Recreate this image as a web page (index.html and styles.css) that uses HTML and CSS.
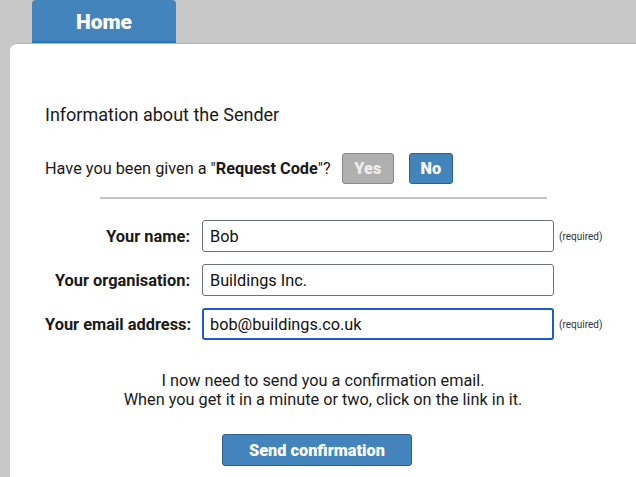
FILE: index.html
```html
<!DOCTYPE html>
<html lang="en">
<head>
<meta charset="utf-8">
<title>Information about the Sender</title>
<link rel="stylesheet" href="styles.css">
</head>
<body>
<nav class="tabs">
  <a class="tab" href="#">Home</a>
</nav>
<main class="card">
  <h1 class="heading">Information about the Sender</h1>
  <div class="question">
    <span>Have you been given a "<b>Request Code</b>"?</span>
    <button class="btn btn-off" type="button">Yes</button>
    <button class="btn btn-on" type="button">No</button>
  </div>
  <hr class="rule">
  <form class="form">
    <label class="label" for="name">Your name:</label>
    <input class="field" id="name" type="text" value="Bob">
    <span class="req">(required)</span>

    <label class="label" for="org">Your organisation:</label>
    <input class="field" id="org" type="text" value="Buildings Inc.">
    <span class="req"></span>

    <label class="label" for="email">Your email address:</label>
    <input class="field field-focus" id="email" type="text" value="bob@buildings.co.uk">
    <span class="req">(required)</span>
  </form>
  <p class="note">I now need to send you a confirmation email.<br>When you get it in a minute or two, click on the link in it.</p>
  <button class="send" type="button">Send confirmation</button>
</main>
</body>
</html>
```
FILE: styles.css
```css
html, body {
  margin: 0;
  padding: 0;
  height: 100%;
}
body {
  background: #c8c8c8;
  font-family: Roboto, "Liberation Sans", sans-serif;
  color: #1a1a1a;
  display: flex;
  flex-direction: column;
  overflow: hidden;
}
.tabs {
  display: flex;
  padding-left: 32px;
  height: 43px;
  flex: none;
}
.tab {
  width: 144px;
  height: 43px;
  box-sizing: border-box;
  background: #4384bd;
  border-bottom: 2px solid #2a73bd;
  border-radius: 4px 4px 0 0;
  color: #fff;
  font-weight: 900;
  font-size: 21px;
  text-decoration: none;
  display: flex;
  justify-content: center;
  align-items: center;
  padding-top: 2px;
}
.card {
  flex: 1;
  margin-left: 10px;
  margin-right: -10px;
  background: #fff;
  border-top: 1px solid #b4b4b4;
  border-radius: 7px 0 0 0;
  padding: 61px 45px 0 35px;
  display: flex;
  flex-direction: column;
}
.heading {
  margin: 0;
  font-size: 18px;
  font-weight: 400;
  line-height: 20px;
}
.question {
  margin-top: 28px;
  display: flex;
  align-items: center;
  font-size: 16.3px;
  height: 31px;
}
.question b {
  font-weight: 700;
}
.btn {
  height: 31px;
  border-radius: 3px;
  font-family: inherit;
  font-size: 16.3px;
  font-weight: 900;
  padding: 0;
  margin: 0;
}
.btn-off {
  margin-left: 11px;
  width: 52px;
  background: #b0b0b0;
  border: 1px solid #8a8a8a;
  color: #eeeeee;
}
.btn-on {
  margin-left: 15px;
  width: 44px;
  background: #4384bd;
  border: 1px solid #2f5f8c;
  color: #fff;
}
.rule {
  margin: 13px auto 0;
  width: 447px;
  border: 0;
  border-top: 2px solid #c4c4c4;
  height: 0;
}
.form {
  margin-top: 21px;
  display: grid;
  grid-template-columns: 157px 352px auto;
  row-gap: 12px;
  align-items: center;
}
.label {
  font-size: 16.4px;
  font-weight: 700;
  text-align: right;
  padding-right: 12px;
  white-space: nowrap;
}
.field {
  width: 352px;
  height: 32px;
  box-sizing: border-box;
  border: 1px solid #6e7280;
  border-radius: 3px;
  padding: 0 7px;
  font-family: inherit;
  font-size: 16.3px;
  color: #111;
  background: #fff;
  margin: 0;
}
.field-focus {
  border: 2px solid #1e5ad6;
  padding: 0 6px;
}
.req {
  font-size: 10px;
  color: #333;
  padding-left: 5px;
  white-space: nowrap;
}
.note {
  margin: 31px 0 0;
  text-align: center;
  font-size: 16.3px;
  line-height: 19px;
}
.send {
  align-self: center;
  margin: 25px 12px 0 0;
  width: 190px;
  height: 32px;
  background: #4384bd;
  border: 1px solid #2f5f8c;
  border-radius: 3px;
  color: #fff;
  font-family: inherit;
  font-size: 16.3px;
  font-weight: 900;
  padding: 0;
}
```
